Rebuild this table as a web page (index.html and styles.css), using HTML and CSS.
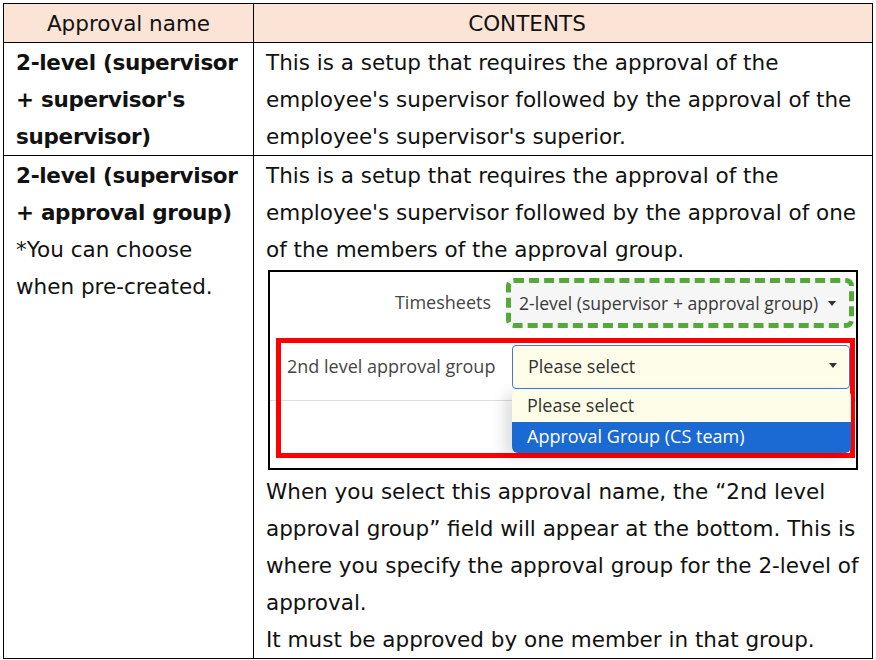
FILE: index.html
```html
<html lang="en">
 <head>
  <meta charset="UTF-8">
  <meta name="viewport" content="width=device-width, initial-scale=1.0">
  <title>Approval settings</title>
  <link rel="stylesheet" href="styles.css">
 </head>
 <body>
  <table class="approval-table">
   <thead>
    <tr>
     <th class="col-name">Approval name</th>
     <th class="col-contents">CONTENTS</th>
    </tr>
   </thead>
   <tbody>
    <tr>
     <td class="name">
      <strong>2-level (supervisor<br>+ supervisor's<br>supervisor)</strong>
     </td>
     <td class="contents">
      This is a setup that requires the approval of the<br>employee's supervisor followed by the approval of the<br>employee's supervisor's superior.
     </td>
    </tr>
    <tr>
     <td class="name">
      <strong>2-level (supervisor<br>+ approval group)</strong><br>*You can choose<br>when pre-created.
     </td>
     <td class="contents">
      This is a setup that requires the approval of the<br>employee's supervisor followed by the approval of one<br>of the members of the approval group.
      <div class="shot">
       <div class="ts-row">
        <span class="field-label">Timesheets</span>
        <div class="ts-select">
         <span>2-level (supervisor + approval group)</span>
         <span class="caret"></span>
        </div>
       </div>
       <div class="group-box">
        <div class="group-row">
         <span class="field-label grow">2nd level approval group</span>
         <div class="group-select">
          <span>Please select</span>
          <span class="caret"></span>
         </div>
        </div>
        <div class="dropdown">
         <div class="option">Please select</div>
         <div class="option selected">Approval Group (CS team)</div>
        </div>
       </div>
      </div>
      When you select this approval name, the “2nd level<br>approval group” field will appear at the bottom. This is<br>where you specify the approval group for the 2-level of<br>approval.<br>It must be approved by one member in that group.
     </td>
    </tr>
   </tbody>
  </table>
 </body>
</html>
```

FILE: styles.css
```css
* {
    box-sizing: border-box;
}

body {
    margin: 0;
    background: white;
    color: #111;
    font-family: 'DejaVu Sans', Verdana, sans-serif;
}

.approval-table {
    margin: 3px 0 0 3px;
    width: 870px;
    table-layout: fixed;
    border-collapse: collapse;
    font-size: 21.5px;
    line-height: 37px;
}

.approval-table th,
.approval-table td {
    border: 1px solid #000;
    vertical-align: top;
}

.approval-table th {
    background: #fbe4d5;
    font-weight: normal;
    height: 37px;
    padding: 1px 0 0;
    text-align: center;
}

.col-name {
    width: 250px;
}

.approval-table th.col-contents {
    padding-right: 72px;
}

.approval-table td {
    padding: 1px 4px 0 12px;
    white-space: nowrap;
}

.name strong {
    font-weight: bold;
    letter-spacing: -0.3px;
}

/* screenshot of the settings form */
.shot {
    position: relative;
    width: 590px;
    height: 200px;
    margin: 2px 0 3px 2px;
    border: 2px solid #000;
    background: white;
    overflow: hidden;
    font-family: 'Open Sans', sans-serif;
    font-size: 18px;
    line-height: normal;
    color: #444;
}

.shot::before {
    content: '';
    position: absolute;
    left: 0;
    right: 0;
    top: 128px;
    height: 1px;
    background: #dedede;
}

.ts-row {
    display: flex;
    justify-content: flex-end;
    align-items: center;
    gap: 15px;
    padding: 6px 2px 0 0;
}

.field-label {
    color: #454545;
    margin-top: -3px;
}

.ts-select {
    width: 348px;
    height: 50px;
    border: 5px dashed #56a83a;
    border-radius: 8px;
    background: #f6f6f6;
    display: flex;
    align-items: center;
    justify-content: space-between;
    padding: 0 13px 0 8px;
    color: #3a3a3a;
    font-size: 17.6px;
}

.caret {
    width: 0;
    height: 0;
    border-left: 4px solid transparent;
    border-right: 4px solid transparent;
    border-top: 5px solid #333;
}

.group-box {
    position: relative;
    height: 120px;
    margin: 10px 1px 0 6px;
    border: 5px solid #ff0000;
}

.group-row {
    display: flex;
    align-items: center;
    padding: 2px 0 0 6px;
}

.grow {
    flex: 1;
}

.group-select {
    width: 338px;
    height: 44px;
    border: 1px solid #3b7ddd;
    border-radius: 4px;
    background: #fdfde9;
    display: flex;
    align-items: center;
    justify-content: space-between;
    padding: 0 12px 3px 15px;
    color: #333;
}

.dropdown {
    position: absolute;
    left: 231px;
    top: 47px;
    width: 339px;
    border-radius: 6px;
    overflow: hidden;
    box-shadow: -8px 4px 14px rgba(0, 0, 0, 0.13);
}

.option {
    height: 31.5px;
    padding: 0 0 2px 15px;
    display: flex;
    align-items: center;
    background: #fefde8;
    color: #333;
}

.option.selected {
    background: #1b69d3;
    color: white;
}
```
